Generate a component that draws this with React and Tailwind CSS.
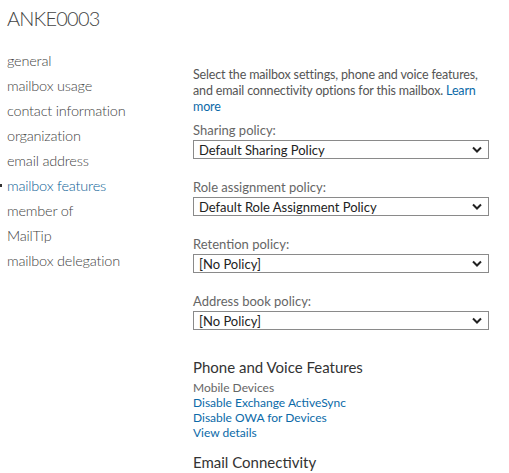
import React from 'react';

const navItems = [
  'general',
  'mailbox usage',
  'contact information',
  'organization',
  'email address',
  'mailbox features',
  'member of',
  'MailTip',
  'mailbox delegation',
];

const policies = [
  { label: 'Sharing policy:', value: 'Default Sharing Policy' },
  { label: 'Role assignment policy:', value: 'Default Role Assignment Policy' },
  { label: 'Retention policy:', value: '[No Policy]' },
  { label: 'Address book policy:', value: '[No Policy]' },
];

const Chevron = () => (
  <svg width="10" height="7" viewBox="0 0 10 7" className="shrink-0">
    <path d="M1 1.5 L5 5.5 L9 1.5" fill="none" stroke="#222" strokeWidth="2" />
  </svg>
);

const PolicySelect = ({ label, value, first }) => (
  <div className={first ? 'mt-[7px]' : 'mt-[20px]'}>
    <div className="text-[13px] leading-[16px] text-[#666]">{label}</div>
    <div className="mt-[2px] h-[19px] w-[296px] border border-[#8a8a8a] bg-white flex items-center justify-between pl-[5px] pr-[6px]">
      <span className="text-[13px] leading-[16px] text-[#222]">{value}</span>
      <Chevron />
    </div>
  </div>
);

export default function App() {
  return (
    <div className="w-[509px] h-[473px] overflow-hidden bg-white font-['Lato',sans-serif]">
      <div className="pl-[7px] pt-[5px] text-[20px] leading-[26px] font-light tracking-[-0.8px] text-[#444]">ANKE0003</div>

      <div className="flex">
        {/* navigation gauche */}
        <div className="w-[193px] shrink-0 pt-[17px]">
          {navItems.map((item) => {
            const active = item === 'mailbox features';
            return (
              <div key={item} className="relative h-[25px] pl-[7px] text-[14.5px] leading-[25px] font-light tracking-[-0.2px]">
                {active && <span className="absolute left-0 top-[11px] w-[2px] h-[3px] bg-[#333]" />}
                <span className={active ? 'text-[#0b5e95]' : 'text-[#444]'}>{item}</span>
              </div>
            );
          })}
        </div>

        {/* contenu principal */}
        <div className="pt-[36px]">
          <p className="whitespace-nowrap text-[12.5px] leading-[16px] tracking-[-0.15px] text-[#555]">
            Select the mailbox settings, phone and voice features,
            <br />
            and email connectivity options for this mailbox. <span className="text-[#0b6aa8]">Learn</span>
            <br />
            <span className="text-[#0b6aa8]">more</span>
          </p>

          {policies.map((p, i) => (
            <PolicySelect key={p.label} label={p.label} value={p.value} first={i === 0} />
          ))}

          <div className="mt-[26px] text-[15px] leading-[22px] text-[#333]">Phone and Voice Features</div>
          <div className="mt-[2px] text-[12px] leading-[15px] text-[#666]">Mobile Devices</div>
          <div className="text-[12px] leading-[15px] text-[#0b6aa8]">Disable Exchange ActiveSync</div>
          <div className="text-[12px] leading-[15px] text-[#0b6aa8]">Disable OWA for Devices</div>
          <div className="text-[12px] leading-[15px] text-[#0b6aa8]">View details</div>

          <div className="mt-[12px] text-[15px] leading-[20px] text-[#333]">Email Connectivity</div>
        </div>
      </div>
    </div>
  );
}
